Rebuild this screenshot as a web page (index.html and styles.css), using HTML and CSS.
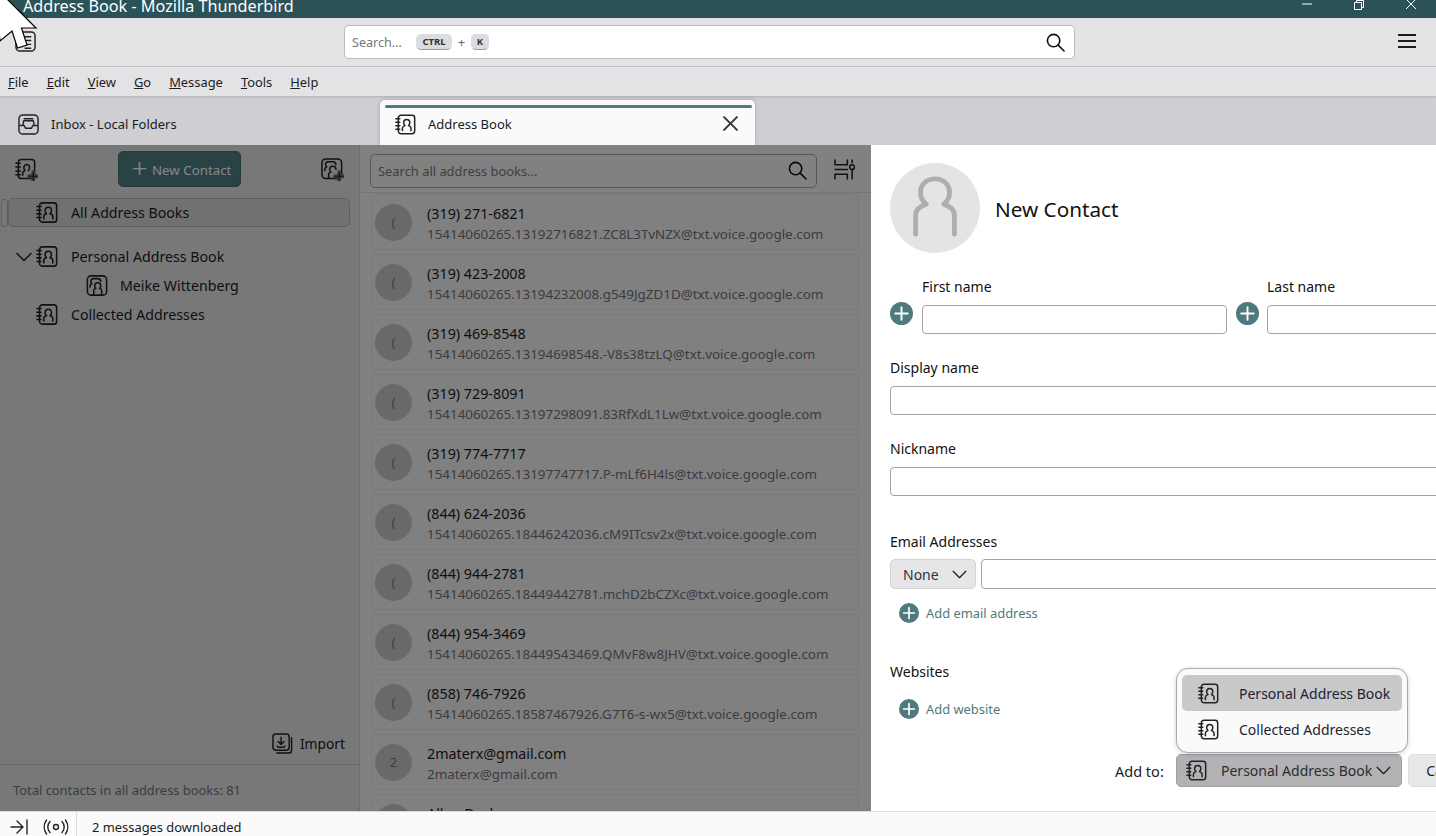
FILE: index.html
```html
<!DOCTYPE html>
<html lang="en">
<head>
<meta charset="utf-8">
<title>Address Book - Mozilla Thunderbird</title>
<link rel="stylesheet" href="styles.css">
</head>
<body>
<svg class="defs" width="0" height="0" aria-hidden="true">
  <symbol id="book" viewBox="0 0 24 24" fill="none" stroke="currentColor" stroke-width="1.7" stroke-linecap="round" stroke-linejoin="round">
    <rect x="3.800" y="1.500" width="18.700" height="21" rx="3"/>
    <path d="M1 5.500h4.500M1 9.500h4.500M1 13.500h4.500M1 17.500h4.500"/>
    <path d="M8.500 19v-3c0-1.400 1.200-2.200 2.900-2.700-1-.9-1.500-2-1.500-3.200 0-2.200 1.500-3.800 3.500-3.800s3.500 1.600 3.500 3.800c0 1.200-.5 2.300-1.500 3.200 1.700.5 2.900 1.300 2.900 2.700v3"/>
  </symbol>
  <symbol id="book-add" viewBox="0 0 24 24" fill="none" stroke="currentColor" stroke-width="1.600" stroke-linecap="round" stroke-linejoin="round">
    <rect x="3.500" y="1.500" width="17" height="20" rx="3"/>
    <path d="M1 5.500h4.500M1 9.500h4.500M1 13.500h4.500M1 17.500h4.500"/>
    <path d="M8 18v-2.500c0-1.300 1.100-2 2.500-2.400-.9-.8-1.300-1.800-1.300-2.900 0-2 1.300-3.400 3-3.400s3 1.400 3 3.400c0 1.100-.4 2.100-1.300 2.900"/>
    <path d="M19 14.500v9M14.500 19h9" stroke="#78787a" stroke-width="4"/>
    <path d="M19 15v8M15 19h8" stroke-width="1.200"/>
  </symbol>
  <symbol id="plus" viewBox="0 0 24 24">
    <circle cx="12" cy="12" r="12" fill="#4f7a7d"/>
    <path d="M12 5.500v13M5.500 12h13" stroke="#fff" stroke-width="2" stroke-linecap="round"/>
  </symbol>
  <symbol id="search" viewBox="0 0 20 20" fill="none" stroke="currentColor" stroke-width="1.700" stroke-linecap="round">
    <circle cx="8" cy="8" r="6.500"/><path d="M12.800 12.800 19 19"/>
  </symbol>
  <symbol id="chev" viewBox="0 0 16 10" fill="none" stroke="currentColor" stroke-width="1.500" stroke-linecap="round" stroke-linejoin="round">
    <path d="M1 1.500 8 8.500 15 1.500"/>
  </symbol>
  <symbol id="people" viewBox="0 0 24 24" fill="none" stroke="currentColor" stroke-width="1.700" stroke-linecap="round" stroke-linejoin="round">
    <rect x="1.500" y="1.500" width="21" height="21" rx="4"/>
    <path d="M4.500 14v-2c0-1 .8-1.600 2-2-.8-.7-1.200-1.500-1.200-2.500C5.300 5.700 6.500 4.500 8 4.500h5c1.500 0 3 1.200 3 3"/>
    <path d="M8.500 22v-4.500c0-1.300 1-2 2.300-2.400-.9-.8-1.300-1.700-1.300-2.800 0-2 1.400-3.300 3.300-3.300s3.300 1.300 3.300 3.300c0 1.100-.4 2-1.300 2.800 1.300.4 2.300 1.100 2.300 2.400V22"/>
  </symbol>
  <symbol id="people-add" viewBox="0 0 24 24" fill="none" stroke="currentColor" stroke-width="1.600" stroke-linecap="round" stroke-linejoin="round">
    <rect x="1" y="1" width="20.500" height="20.500" rx="4"/>
    <path d="M4 13v-1.500c0-1 .8-1.600 2-2-.8-.7-1.200-1.500-1.200-2.500C4.800 5.200 6 4 7.500 4h5c1.500 0 3 1.200 3 3"/>
    <path d="M8 21v-4c0-1.300 1-2 2.300-2.400-.9-.8-1.300-1.700-1.300-2.800 0-2 1.400-3.300 3.300-3.300s3.300 1.300 3.300 3.300"/>
    <path d="M19 14.500v9M14.500 19h9" stroke="#78787a" stroke-width="4"/>
    <path d="M19 15v8M15 19h8" stroke-width="1.200"/>
  </symbol>
</svg>

<header class="titlebar">
  <span class="title">Address Book - Mozilla Thunderbird</span>
  <div class="winbtns">
    <svg class="winbtn" viewBox="0 0 12 12"><path d="M1 6h10" stroke="#fff" fill="none"/></svg>
    <svg class="winbtn" viewBox="0 0 12 12"><path d="M1.500 4.500h7v7h-7zM3.500 4.500v-2h7v7h-2" stroke="#fff" fill="none"/></svg>
    <svg class="winbtn" viewBox="0 0 12 12"><path d="M1 1l10 10M11 1 1 11" stroke="#fff" fill="none"/></svg>
  </div>
</header>

<div class="toolbar">
  <svg class="appicon" viewBox="0 0 22 22" fill="none" stroke="#222" stroke-width="1.500"><rect x="1" y="1" width="20" height="20" rx="4"/><path d="M10 6h7M10 10h7M10 14h7M10 18h7"/></svg>
  <div class="globalsearch">
    <span class="placeholder">Search...</span>
    <kbd class="key key-wide">CTRL</kbd>
    <span class="keyplus">+</span>
    <kbd class="key">K</kbd>
    <svg class="globalsearch-icon"><use href="#search"/></svg>
  </div>
  <div class="hamburger"><i></i><i></i><i></i></div>
</div>

<nav class="menubar">
  <span><u>F</u>ile</span><span><u>E</u>dit</span><span><u>V</u>iew</span><span><u>G</u>o</span><span><u>M</u>essage</span><span><u>T</u>ools</span><span><u>H</u>elp</span>
</nav>

<div class="tabbar">
  <div class="tab">
    <svg class="tab-icon" viewBox="0 0 22 22" fill="none" stroke="#222" stroke-width="1.500" stroke-linejoin="round"><rect x="1" y="1" width="20" height="20" rx="4"/><path d="M1.500 12h5l1.500 3h6l1.500-3h5M5 12l1-5h10l1 5M6 5h10"/></svg>
    <span>Inbox - Local Folders</span>
  </div>
  <div class="tab tab-active">
    <svg class="tab-icon"><use href="#book"/></svg>
    <span class="tab-label">Address Book</span>
    <svg class="tab-close" viewBox="0 0 14 14"><path d="M1 1l12 12M13 1 1 13" stroke="#333" stroke-width="1.800" fill="none" stroke-linecap="round"/></svg>
  </div>
</div>

<main class="main">
  <aside class="sidebar">
    <div class="side-toolbar">
      <svg class="side-tool"><use href="#book-add"/></svg>
      <button class="newcontact"><span class="newcontact-plus">+</span>New Contact</button>
      <svg class="side-tool"><use href="#people-add"/></svg>
    </div>
    <div class="tree">
      <div class="treerow treerow-sel">
        <svg class="treeicon"><use href="#book"/></svg><span>All Address Books</span>
      </div>
      <div class="treerow treerow-book">
        <svg class="twisty"><use href="#chev"/></svg>
        <svg class="treeicon"><use href="#book"/></svg><span>Personal Address Book</span>
      </div>
      <div class="treerow treerow-list">
        <svg class="treeicon"><use href="#people"/></svg><span>Meike Wittenberg</span>
      </div>
      <div class="treerow">
        <svg class="treeicon"><use href="#book"/></svg><span>Collected Addresses</span>
      </div>
    </div>
    <div class="import">
      <svg class="import-icon" viewBox="0 0 22 22" fill="none" stroke="#222" stroke-width="1.500" stroke-linecap="round" stroke-linejoin="round"><rect x="1" y="1" width="17" height="17" rx="3"/><path d="M20.500 5v13a3 3 0 0 1-3 3H5M9.500 4.500v7M6.500 9l3 3 3-3M5.500 13.500c0 1 1 1.500 2 1.500h4c1 0 2-.5 2-1.500"/></svg>
      <span>Import</span>
    </div>
    <div class="side-foot">Total contacts in all address books: 81</div>
  </aside>

  <section class="listpane">
    <div class="list-head">
      <div class="list-search">
        <span>Search all address books...</span>
        <svg class="list-search-icon"><use href="#search"/></svg>
      </div>
      <svg class="list-filter" viewBox="0 0 22 22" fill="none" stroke="#222" stroke-width="1.600" stroke-linecap="round" stroke-linejoin="round"><path d="M1 1v5h13V1M1 11h13M1 21v-5h13v5M19 1v3M19 12v9"/><circle cx="19" cy="8.500" r="2.500"/></svg>
    </div>
    <div class="cards">
      <article class="card"><div class="avatar">(</div><div class="card-text"><div class="card-name">(319) 271-6821</div><div class="card-mail">15414060265.13192716821.ZC8L3TvNZX@txt.voice.google.com</div></div></article>
      <article class="card"><div class="avatar">(</div><div class="card-text"><div class="card-name">(319) 423-2008</div><div class="card-mail">15414060265.13194232008.g549JgZD1D@txt.voice.google.com</div></div></article>
      <article class="card"><div class="avatar">(</div><div class="card-text"><div class="card-name">(319) 469-8548</div><div class="card-mail">15414060265.13194698548.-V8s38tzLQ@txt.voice.google.com</div></div></article>
      <article class="card"><div class="avatar">(</div><div class="card-text"><div class="card-name">(319) 729-8091</div><div class="card-mail">15414060265.13197298091.83RfXdL1Lw@txt.voice.google.com</div></div></article>
      <article class="card"><div class="avatar">(</div><div class="card-text"><div class="card-name">(319) 774-7717</div><div class="card-mail">15414060265.13197747717.P-mLf6H4ls@txt.voice.google.com</div></div></article>
      <article class="card"><div class="avatar">(</div><div class="card-text"><div class="card-name">(844) 624-2036</div><div class="card-mail">15414060265.18446242036.cM9ITcsv2x@txt.voice.google.com</div></div></article>
      <article class="card"><div class="avatar">(</div><div class="card-text"><div class="card-name">(844) 944-2781</div><div class="card-mail">15414060265.18449442781.mchD2bCZXc@txt.voice.google.com</div></div></article>
      <article class="card"><div class="avatar">(</div><div class="card-text"><div class="card-name">(844) 954-3469</div><div class="card-mail">15414060265.18449543469.QMvF8w8JHV@txt.voice.google.com</div></div></article>
      <article class="card"><div class="avatar">(</div><div class="card-text"><div class="card-name">(858) 746-7926</div><div class="card-mail">15414060265.18587467926.G7T6-s-wx5@txt.voice.google.com</div></div></article>
      <article class="card"><div class="avatar">2</div><div class="card-text"><div class="card-name">2materx@gmail.com</div><div class="card-mail">2materx@gmail.com</div></div></article>
      <article class="card"><div class="avatar">A</div><div class="card-text"><div class="card-name">Allen Dack</div><div class="card-mail">allen@gmail.com</div></div></article>
    </div>
  </section>

  <div class="backdrop"></div>

  <section class="form">
    <div class="form-head">
      <div class="photo">
        <svg class="photo-icon" viewBox="0 0 48 64" fill="none" stroke="#aeaeb0" stroke-width="5" stroke-linecap="round" stroke-linejoin="round"><path d="M4 60V40c0-6 5-9 11-11-4-3-6-8-6-12C9 9 15 3 24 3s15 6 15 14c0 4-2 9-6 12 6 2 11 5 11 11v20"/></svg>
      </div>
      <h1 class="form-title">New Contact</h1>
    </div>

    <div class="names">
      <svg class="plus-btn"><use href="#plus"/></svg>
      <label class="name-field"><span class="label">First name</span><span class="input"></span></label>
      <svg class="plus-btn plus-btn-last"><use href="#plus"/></svg>
      <label class="name-field"><span class="label">Last name</span><span class="input"></span></label>
    </div>

    <label class="field"><span class="label">Display name</span><span class="input input-long"></span></label>
    <label class="field"><span class="label">Nickname</span><span class="input input-long"></span></label>

    <div class="field field-email">
      <span class="label">Email Addresses</span>
      <div class="email-row">
        <div class="none-select"><span>None</span><svg class="chev"><use href="#chev"/></svg></div>
        <span class="input input-long"></span>
      </div>
      <div class="add-row"><svg class="add-plus"><use href="#plus"/></svg><span>Add email address</span></div>
    </div>

    <div class="field field-web">
      <span class="label">Websites</span>
      <div class="add-row"><svg class="add-plus"><use href="#plus"/></svg><span>Add website</span></div>
    </div>

    <div class="form-foot">
      <span class="addto">Add to:</span>
      <div class="book-select">
        <svg class="select-book"><use href="#book"/></svg>
        <span>Personal Address Book</span>
        <svg class="chev"><use href="#chev"/></svg>
      </div>
      <button class="cancel">Cancel</button>
    </div>

    <div class="popup">
      <div class="popup-item popup-item-on"><svg class="select-book"><use href="#book"/></svg><span>Personal Address Book</span></div>
      <div class="popup-item"><svg class="select-book"><use href="#book"/></svg><span>Collected Addresses</span></div>
    </div>
  </section>
</main>

<footer class="statusbar">
  <svg class="st-collapse" viewBox="0 0 18 16" fill="none" stroke="#222" stroke-width="1.400" stroke-linecap="round" stroke-linejoin="round"><path d="M1 8h11M7 2l6 6-6 6M17 1v14"/></svg>
  <svg class="st-radio" viewBox="0 0 26 16" fill="none" stroke="#222" stroke-width="1.400" stroke-linecap="round"><circle cx="13" cy="8" r="2.500"/><path d="M7 2.500a8 8 0 0 0 0 11M19 2.500a8 8 0 0 1 0 11M3.500 1a12 12 0 0 0 0 14M22.500 1a12 12 0 0 1 0 14"/></svg>
  <span class="st-text">2 messages downloaded</span>
</footer>

<svg class="cursor" viewBox="0 0 40 52"><path d="M-6-14 36 28 21.500 28 27 45 17.500 48 12 31 0 41Z" fill="#fff" stroke="#000" stroke-width="1.200" stroke-linejoin="miter"/></svg>
</body>
</html>
```
FILE: styles.css
```css
* { box-sizing: border-box; }
html, body { margin: 0; height: 100%; }
body {
  width: 1436px;
  height: 836px;
  overflow: hidden;
  display: flex;
  flex-direction: column;
  position: relative;
  font-family: "Noto Sans", "Open Sans", sans-serif;
  font-size: 14px;
  color: #1c1c1e;
  background: #fff;
}
.defs { position: absolute; }

.titlebar {
  flex: 0 0 18px;
  background: #2a5257;
  color: #fff;
  overflow: hidden;
  display: flex;
  justify-content: space-between;
  padding-left: 23px;
}
.title { font-size: 16.2px; line-height: 12px; white-space: nowrap; }
.winbtns { display: flex; gap: 40px; padding-right: 19px; margin-top: -2px; }
.winbtn { width: 12px; height: 12px; }

.toolbar {
  flex: 0 0 49px;
  background: #e3e3e6;
  border-bottom: 1px solid #c4c4c8;
  display: flex;
  align-items: center;
  padding: 0 20px 0 15px;
}
.appicon { width: 21px; height: 21px; margin-top: -2px; }
.globalsearch {
  margin-left: 308px;
  width: 731px;
  height: 34px;
  background: #fff;
  border: 1px solid #bcbcc0;
  border-radius: 5px;
  display: flex;
  align-items: center;
  padding: 0 9px 0 7px;
}
.placeholder { color: #77777b; font-size: 12.6px; width: 64px; }
.key {
  font-family: "Noto Sans", sans-serif;
  font-weight: 700;
  font-size: 9.5px;
  width: 18px;
  height: 16px;
  line-height: 14px;
  text-align: center;
  background: #dcdce0;
  border: 1px solid #dcdce0;
  border-bottom-color: #9a9a9e;
  border-radius: 5px;
  color: #333;
}
.key-wide { width: 36px; }
.keyplus { width: 19px; text-align: center; color: #666; font-size: 13px; }
.globalsearch-icon { width: 19px; height: 19px; margin-left: auto; color: #111; }
.hamburger { margin-left: auto; margin-top: -2px; display: flex; flex-direction: column; gap: 4.500px; width: 18px; }
.hamburger i { display: block; height: 1.500px; background: #1c1c1e; }

.menubar {
  flex: 0 0 29px;
  background: #e3e3e6;
  display: flex;
  align-items: center;
  gap: 18px;
  padding: 1px 0 0 8px;
  font-size: 12.9px;
  position: relative;
  z-index: 2;
  box-shadow: 0 1px 2px rgba(0,0,0,.15);
}

.tabbar {
  flex: 0 0 49px;
  background: #cfcfd3;
  display: flex;
  padding-top: 4px;
  font-size: 13px;
}
.tab {
  width: 380px;
  display: flex;
  align-items: center;
  padding: 3px 0 0 18px;
  gap: 12px;
}
.tab-icon { width: 21px; height: 23px; color: #222; flex: none; }
.tab-active {
  width: 375px;
  background: #fafafa;
  border-radius: 5px 5px 0 0;
  padding: 3px 17px 0 15px;
  position: relative;
  box-shadow: 0 0 4px rgba(0,0,0,.2);
}
.tab-active::before {
  content: "";
  position: absolute;
  top: 5px;
  left: 5px;
  right: 3px;
  height: 3px;
  border-radius: 2px;
  background: #4f7a7d;
}
.tab-label { flex: 1; }
.tab-close { width: 15px; height: 15px; margin-top: -2px; }

.main {
  flex: 1;
  min-height: 0;
  display: flex;
  position: relative;
  overflow: hidden;
}
.backdrop {
  position: absolute;
  left: 0;
  top: 0;
  bottom: 0;
  width: 871px;
  background: rgba(0,0,0,.48);
}

.sidebar {
  flex: 0 0 360px;
  background: #e6e6e8;
  border-right: 1px solid #d0d0d2;
  display: flex;
  flex-direction: column;
}
.side-toolbar {
  flex: 0 0 46px;
  display: flex;
  align-items: center;
  justify-content: space-between;
  padding: 2px 15px 0 15px;
}
.side-tool { width: 23px; height: 23px; color: #222; }
.newcontact {
  width: 123px;
  height: 36px;
  background: #4f8084;
  border: 1px solid #477478;
  border-radius: 5px;
  color: #fff;
  font: inherit;
  font-size: 13.3px;
  display: flex;
  align-items: center;
  padding: 2px 0 0 8px;
}
.newcontact-plus { font-size: 28px; font-weight: 300; line-height: 1; width: 25px; margin-top: -6px; }
.tree { padding: 7px 0 0 8px; flex: 1; }
.treerow {
  display: flex;
  align-items: center;
  height: 29px;
  padding-left: 28px;
  width: 342px;
  font-size: 14.2px;
  color: #1c1c1e;
  position: relative;
}
.treerow-sel {
  background: #d8d8da;
  border: 1px solid #b8b8ba;
  border-radius: 5px;
  height: 29px;
  padding-left: 27px;
  margin-bottom: 15px;
}
.treerow-sel::before {
  content: "";
  position: absolute;
  left: -8px;
  top: 0;
  width: 5px;
  height: 26px;
  border: 1px solid #b0b0b2;
  border-radius: 3px;
}
.treeicon { width: 22px; height: 23px; margin-right: 13px; color: #222; flex: none; }
.treerow-list { padding-left: 78px; }
.treerow-list .treeicon { margin-right: 12px; }
.twisty { position: absolute; left: 8px; top: 10px; width: 16px; height: 10px; color: #222; }
.import {
  flex: 0 0 44px;
  display: flex;
  justify-content: flex-end;
  align-items: center;
  gap: 7px;
  padding: 2px 14px 0 0;
  font-size: 13.8px;
  border-bottom: 1px solid #cbcbcd;
}
.import-icon { width: 21px; height: 21px; }
.side-foot {
  flex: 0 0 46px;
  padding: 15px 0 0 13px;
  font-size: 12.9px;
  line-height: 20px;
  color: #737377;
}

.listpane {
  flex: 0 0 511px;
  background: #f8f8f9;
  display: flex;
  flex-direction: column;
  min-height: 0;
}
.list-head {
  flex: 0 0 48px;
  border-bottom: 1px solid #e0e0e2;
  display: flex;
  align-items: center;
  padding: 4px 16px 0 10px;
}
.list-search {
  width: 447px;
  height: 34px;
  border: 1px solid #a8a8aa;
  border-radius: 5px;
  display: flex;
  align-items: center;
  justify-content: space-between;
  padding: 0 9px 0 7px;
  color: #78787c;
  font-size: 12.9px;
}
.list-search-icon { width: 19px; height: 19px; color: #111; }
.list-filter { width: 21px; height: 21px; margin-left: 17px; margin-top: -2px; }
.cards { padding: 1px 12px 0 11px; display: flex; flex-direction: column; gap: 4px; }
.card {
  flex: 0 0 56px;
  border: 1px solid #e8e8ea;
  border-radius: 5px;
  display: flex;
  align-items: center;
  padding-left: 3px;
  background: #f6f6f7;
}
.avatar {
  width: 37px;
  height: 37px;
  flex: none;
  border-radius: 50%;
  background: #cacacc;
  color: #78787c;
  font-size: 13px;
  display: flex;
  align-items: center;
  justify-content: center;
  margin-right: 15px;
}
.card-text { padding-top: 3px; }
.card-name { font-size: 14.3px; line-height: 21px; color: #1c1c1e; }
.card-mail { font-size: 13.4px; line-height: 20px; color: #737377; white-space: nowrap; }

.form {
  flex: 1;
  min-width: 0;
  padding: 18px 0 0 19px;
  background: #fff;
  display: flex;
  flex-direction: column;
  position: relative;
  overflow: hidden;
}
.form-head { display: flex; align-items: center; gap: 15px; height: 90px; flex: none; }
.photo {
  width: 90px;
  height: 90px;
  border-radius: 50%;
  background: #e4e4e6;
  display: flex;
  align-items: center;
  justify-content: center;
}
.photo-icon { width: 48px; height: 62px; margin-top: -2px; }
.form-title { margin: 0 0 -1px; font-size: 20.7px; font-weight: 400; color: #111; }
.names { display: flex; margin-top: 24px; align-items: flex-start; flex: none; }
.plus-btn { width: 23px; height: 23px; flex: none; margin: 25px 9px 0 0; }
.plus-btn-last { margin-right: 8px; }
.name-field { display: flex; flex-direction: column; width: 305px; flex: none; margin-right: 9px; }
.label { display: block; font-size: 14px; line-height: 20px; color: #111; margin-bottom: 8px; }
.input {
  display: block;
  height: 29px;
  background: #fff;
  border: 1px solid #a4a4a8;
  border-radius: 4px;
  flex: none;
}
.input-long { width: 700px; }
.field { display: block; margin-top: 24px; flex: none; }
.field-email { margin-top: 36px; }
.field-email .label { margin-bottom: 7px; }
.email-row { display: flex; gap: 5px; }
.email-row .input { height: 30px; }
.none-select {
  flex: none;
  width: 86px;
  height: 30px;
  background: #e6e6e8;
  border: 1px solid #d4d4d6;
  border-radius: 5px;
  display: flex;
  align-items: center;
  padding-left: 12px;
  gap: 13px;
  color: #333;
  font-size: 14px;
}
.chev { width: 15px; height: 9px; color: #222; flex: none; }
.add-row {
  display: flex;
  align-items: center;
  gap: 7px;
  padding-left: 9px;
  color: #4f7a7d;
  font-size: 12.9px;
  margin-top: 14px;
  height: 20px;
}
.add-plus { width: 20px; height: 20px; }
.field-web { margin-top: 39px; }
.field-web .label { margin-bottom: 17px; }
.form-foot {
  position: absolute;
  left: 244px;
  top: 609px;
  display: flex;
  align-items: center;
  white-space: nowrap;
}
.addto { width: 61px; font-size: 14.5px; color: #222; }
.book-select {
  width: 226px;
  height: 33px;
  background: #b2b2b4;
  border: 1px solid #a0a0a2;
  border-radius: 5px;
  display: flex;
  align-items: center;
  padding: 0 10px 0 9px;
  color: #2c2c30;
  font-size: 14px;
}
.book-select .chev { margin-left: auto; }
.select-book { width: 21px; height: 23px; color: #222; flex: none; margin-right: 14px; }
.cancel {
  margin-left: 6px;
  width: 80px;
  height: 33px;
  background: #e8e8ea;
  border: 1px solid #dcdcde;
  border-radius: 5px;
  font: inherit;
  color: #222;
}
.popup {
  position: absolute;
  left: 305px;
  top: 523px;
  width: 232px;
  height: 85px;
  background: #fafafa;
  border: 1px solid #a8a8b0;
  border-radius: 12px;
  padding: 6px 5px 5px;
  box-shadow: 0 1px 4px rgba(0,0,0,.2);
  display: flex;
  flex-direction: column;
  z-index: 3;
}
.popup-item {
  height: 36px;
  display: flex;
  align-items: center;
  padding: 1px 0 0 16px;
  border-radius: 5px;
  font-size: 14px;
  color: #1c2230;
}
.popup-item .select-book { margin-right: 20px; margin-top: -1px; }
.popup-item-on { background: #c9c9cb; }

.statusbar {
  flex: 0 0 25px;
  background: #fafafa;
  border-top: 1px solid #dcdcde;
  display: flex;
  align-items: center;
  padding: 6px 0 0 10px;
  font-size: 12.9px;
  color: #1c1c1e;
}
.st-collapse { width: 18px; height: 16px; }
.st-radio { width: 26px; height: 16px; margin-left: 15px; }
.st-text {
  margin-left: 7px;
  border-left: 1px solid #dcdcde;
  padding-left: 15px;
  height: 24px;
  line-height: 24px;
  margin-top: -6px;
  padding-top: 3px;
}
.cursor {
  position: absolute;
  left: 0;
  top: 0;
  width: 40px;
  height: 52px;
  overflow: visible;
  z-index: 10;
}
```
